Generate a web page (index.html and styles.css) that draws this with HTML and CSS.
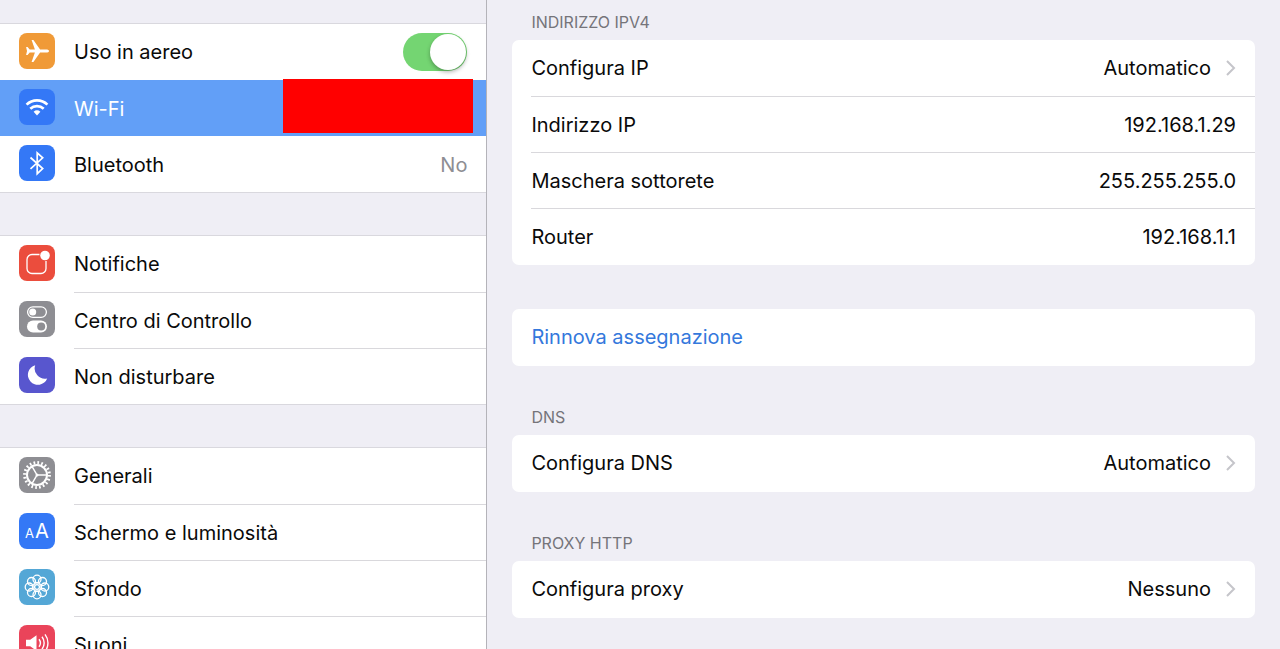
FILE: index.html
```html
<!DOCTYPE html>
<html lang="it">
<head>
<meta charset="utf-8">
<meta name="viewport" content="width=device-width, initial-scale=1">
<title>Impostazioni</title>
<link rel="stylesheet" href="styles.css">
</head>
<body>
<div class="app">
  <nav class="sidebar" aria-label="Impostazioni">
    <ul class="group">
      <li class="item">
        <svg class="icon orange" viewBox="0 0 36 36" aria-hidden="true"><path fill="#fff" d="M30 18c0-1-1.300-1.500-2.800-1.500h-6.100L14.400 7h-1.800l3.300 9.500h-5.200L8.600 14H7.100l.9 4-.9 4h1.500l2.100-2.500h5.200L12.600 29h1.800l6.700-9.500h6.100c1.500 0 2.800-.5 2.800-1.500z"/></svg>
        <label class="content" for="airplane">
          <span class="label">Uso in aereo</span>
          <input class="switch" id="airplane" type="checkbox" role="switch" checked>
        </label>
      </li>
      <li class="item selected">
        <svg class="icon blue" viewBox="0 0 36 36" aria-hidden="true"><g fill="none" stroke="#fff" stroke-width="2.700"><path d="M7.600 15.600a15 15 0 0 1 20.800 0"/><path d="M11.300 19.700a9.800 9.800 0 0 1 13.400 0"/></g><path fill="#fff" d="M14.600 22.800a5.200 5.200 0 0 1 6.800 0L18 26.400z"/></svg>
        <a class="content" href="#wifi" aria-current="page"><span class="label">Wi-Fi</span></a>
        <span class="redaction"></span>
      </li>
      <li class="item">
        <svg class="icon blue" viewBox="0 0 36 36" aria-hidden="true"><path fill="none" stroke="#fff" stroke-width="1.700" d="M11.500 12.500l12.200 11-5.500 5.200V7.800l5.500 5-12.200 11"/></svg>
        <a class="content" href="#bluetooth"><span class="label">Bluetooth</span><span class="state">No</span></a>
      </li>
    </ul>

    <ul class="group">
      <li class="item">
        <svg class="icon red" viewBox="0 0 36 36" aria-hidden="true"><path fill="none" stroke="#fff" stroke-width="1.300" d="M20.500 9.500H13a5 5 0 0 0-5 5v9a5 5 0 0 0 5 5h9a5 5 0 0 0 5-5V16"/><circle cx="26" cy="10.500" r="4.800" fill="#fff"/></svg>
        <a class="content" href="#notifiche"><span class="label">Notifiche</span></a>
      </li>
      <li class="item">
        <svg class="icon gray" viewBox="0 0 36 36" aria-hidden="true"><rect x="8.600" y="5.800" width="18.800" height="10.600" rx="5.300" fill="none" stroke="#fff" stroke-width="1.300"/><circle cx="13.700" cy="11.100" r="3.500" fill="#fff"/><rect x="8" y="19.500" width="20" height="12" rx="6" fill="#fff"/><circle cx="22.200" cy="25.500" r="4" fill="#8e8e93"/></svg>
        <a class="content" href="#controllo"><span class="label">Centro di Controllo</span></a>
      </li>
      <li class="item">
        <svg class="icon purple" viewBox="0 0 36 36" aria-hidden="true"><path fill="#fff" d="M16.200 8.200A10 10 0 1 0 28.200 21.500 10.300 10.300 0 0 1 16.200 8.200z"/></svg>
        <a class="content" href="#non-disturbare"><span class="label">Non disturbare</span></a>
      </li>
    </ul>

    <ul class="group">
      <li class="item">
        <svg class="icon gray" viewBox="0 0 36 36" aria-hidden="true"><g fill="none" stroke="#fff"><circle cx="18" cy="18" r="12.400" stroke-width="3" stroke-dasharray="1.700 2.196"/><circle cx="18" cy="18" r="10" stroke-width="2"/><path stroke-width="1.500" d="M18 18h10M18 18l-5-8.700M18 18l-5 8.700"/></g><circle cx="18" cy="18" r="1.500" fill="#fff"/></svg>
        <a class="content" href="#generali"><span class="label">Generali</span></a>
      </li>
      <li class="item">
        <svg class="icon blue" viewBox="0 0 36 36" aria-hidden="true"><g fill="#fff" font-family="Inter, sans-serif"><text x="6" y="25" font-size="13">A</text><text x="16" y="25" font-size="20">A</text></g></svg>
        <a class="content" href="#schermo"><span class="label">Schermo e luminosità</span></a>
      </li>
      <li class="item">
        <svg class="icon sky" viewBox="0 0 36 36" aria-hidden="true"><g fill="none" stroke="#fff" stroke-width="1.300"><circle cx="18" cy="10.200" r="4"/><circle cx="23.500" cy="12.500" r="4"/><circle cx="25.800" cy="18" r="4"/><circle cx="23.500" cy="23.500" r="4"/><circle cx="18" cy="25.800" r="4"/><circle cx="12.500" cy="23.500" r="4"/><circle cx="10.200" cy="18" r="4"/><circle cx="12.500" cy="12.500" r="4"/><circle cx="18" cy="18" r="2.400"/><circle cx="18" cy="18" r="4.600" stroke-width="1"/></g></svg>
        <a class="content" href="#sfondo"><span class="label">Sfondo</span></a>
      </li>
      <li class="item">
        <svg class="icon pink" viewBox="0 0 36 36" aria-hidden="true"><path fill="#fff" d="M7 14.800h4.200l6.300-4.600v15.600l-6.300-4.600H7z"/><g fill="none" stroke="#fff" stroke-width="1.400"><path d="M20 14.300a6 6 0 0 1 0 7.400"/><path d="M23 11.800a10 10 0 0 1 0 12.400"/><path d="M26 9.400a14 14 0 0 1 0 17.200"/></g></svg>
        <a class="content" href="#suoni"><span class="label">Suoni</span></a>
      </li>
    </ul>
  </nav>

  <main class="detail">
    <section class="section">
      <h2 class="heading">Indirizzo IPv4</h2>
      <div class="card">
        <button class="row" type="button"><span>Configura IP</span><span class="value">Automatico</span><svg class="chevron" viewBox="0 0 10 18" aria-hidden="true"><path d="M1 2l7 7-7 7"/></svg></button>
        <div class="row"><span>Indirizzo IP</span><span class="value">192.168.1.29</span></div>
        <div class="row"><span>Maschera sottorete</span><span class="value">255.255.255.0</span></div>
        <div class="row"><span>Router</span><span class="value">192.168.1.1</span></div>
      </div>
    </section>
    <section class="section untitled">
      <div class="card">
        <button class="row action" type="button">Rinnova assegnazione</button>
      </div>
    </section>
    <section class="section">
      <h2 class="heading">DNS</h2>
      <div class="card">
        <button class="row" type="button"><span>Configura DNS</span><span class="value">Automatico</span><svg class="chevron" viewBox="0 0 10 18" aria-hidden="true"><path d="M1 2l7 7-7 7"/></svg></button>
      </div>
    </section>
    <section class="section">
      <h2 class="heading">Proxy HTTP</h2>
      <div class="card">
        <button class="row" type="button"><span>Configura proxy</span><span class="value">Nessuno</span><svg class="chevron" viewBox="0 0 10 18" aria-hidden="true"><path d="M1 2l7 7-7 7"/></svg></button>
      </div>
    </section>
  </main>
</div>
</body>
</html>
```
FILE: styles.css
```css
* { box-sizing: border-box; }

body {
  margin: 0;
  background: #efeef5;
  color: #0a0a0a;
  font: 20px/28px Inter, "Liberation Sans", sans-serif;
}

.app {
  display: flex;
  height: 100vh;
  overflow: hidden;
}

.sidebar {
  display: flex;
  flex-direction: column;
  gap: 42px;
  width: calc(38% + 1px);
  padding-top: 23px;
  border-right: 1px solid #b4b3b9;
  overflow: hidden;
}

.group {
  flex: none;
  margin: 0;
  padding: 0;
  list-style: none;
  background: #fff;
  border-top: 1px solid #d9d8de;
  border-bottom: 1px solid #d9d8de;
}

.item {
  display: flex;
  align-items: center;
  position: relative;
  height: 56px;
  padding-left: 19px;
  gap: 19px;
}

.icon {
  flex: none;
  width: 36px;
  height: 36px;
  margin-bottom: 2px;
  border-radius: 8px;
}

.orange { background: #f09a37; }
.blue { background: #3478f6; }
.red { background: #eb4d3d; }
.gray { background: #8e8e93; }
.purple { background: #5856ce; }
.sky { background: #54a7d6; }
.pink { background: #ea445a; }

.content {
  display: flex;
  flex: 1;
  align-items: center;
  justify-content: space-between;
  height: 100%;
  padding-right: 19px;
  color: inherit;
  text-decoration: none;
}

.item + .item .content { border-top: 1px solid #d9d8dc; }

.item.selected {
  background: #629ff7;
  color: #fff;
}

.item.selected .content,
.item.selected + .item .content { border-top-color: transparent; }

.state { color: #8e8e93; }

.redaction {
  position: absolute;
  top: -1px;
  right: 13px;
  width: 190px;
  height: 54px;
  background: #f00;
}

.switch {
  appearance: none;
  display: flex;
  justify-content: flex-end;
  width: 64px;
  height: 38px;
  margin: 0;
  padding: 1px;
  border-radius: 19px;
  background: #e5e5ea;
}

.switch:checked { background: #74d572; }

.switch::before {
  content: "";
  width: 36px;
  height: 36px;
  border-radius: 50%;
  background: #fff;
  box-shadow: 0 2px 4px rgba(0, 0, 0, .3);
}

.detail {
  flex: 1;
  padding: 8px 25px;
  overflow: hidden;
}

.section + .section { margin-top: 37px; }

.section + .untitled { margin-top: 44px; }

.heading {
  margin: 0;
  padding: 0 19px 4px;
  color: #75747a;
  font-size: 16px;
  font-weight: 400;
  line-height: 28px;
  text-transform: uppercase;
}

.card {
  padding-bottom: 1px;
  border-radius: 7px;
  background: #fff;
}

.row {
  display: flex;
  align-items: center;
  width: calc(100% - 19px);
  height: 56px;
  margin: 0 0 0 19px;
  padding: 0 19px 0 0;
  border: 0;
  background: none;
  color: inherit;
  font: inherit;
  text-align: left;
}

.row + .row { border-top: 1px solid #d9d8dc; }

.value { margin-left: auto; }

.row.action { color: #3478dc; }

.chevron {
  width: 10px;
  height: 18px;
  margin-left: 15px;
  fill: none;
  stroke: #c5c5ca;
  stroke-width: 2;
}
```
